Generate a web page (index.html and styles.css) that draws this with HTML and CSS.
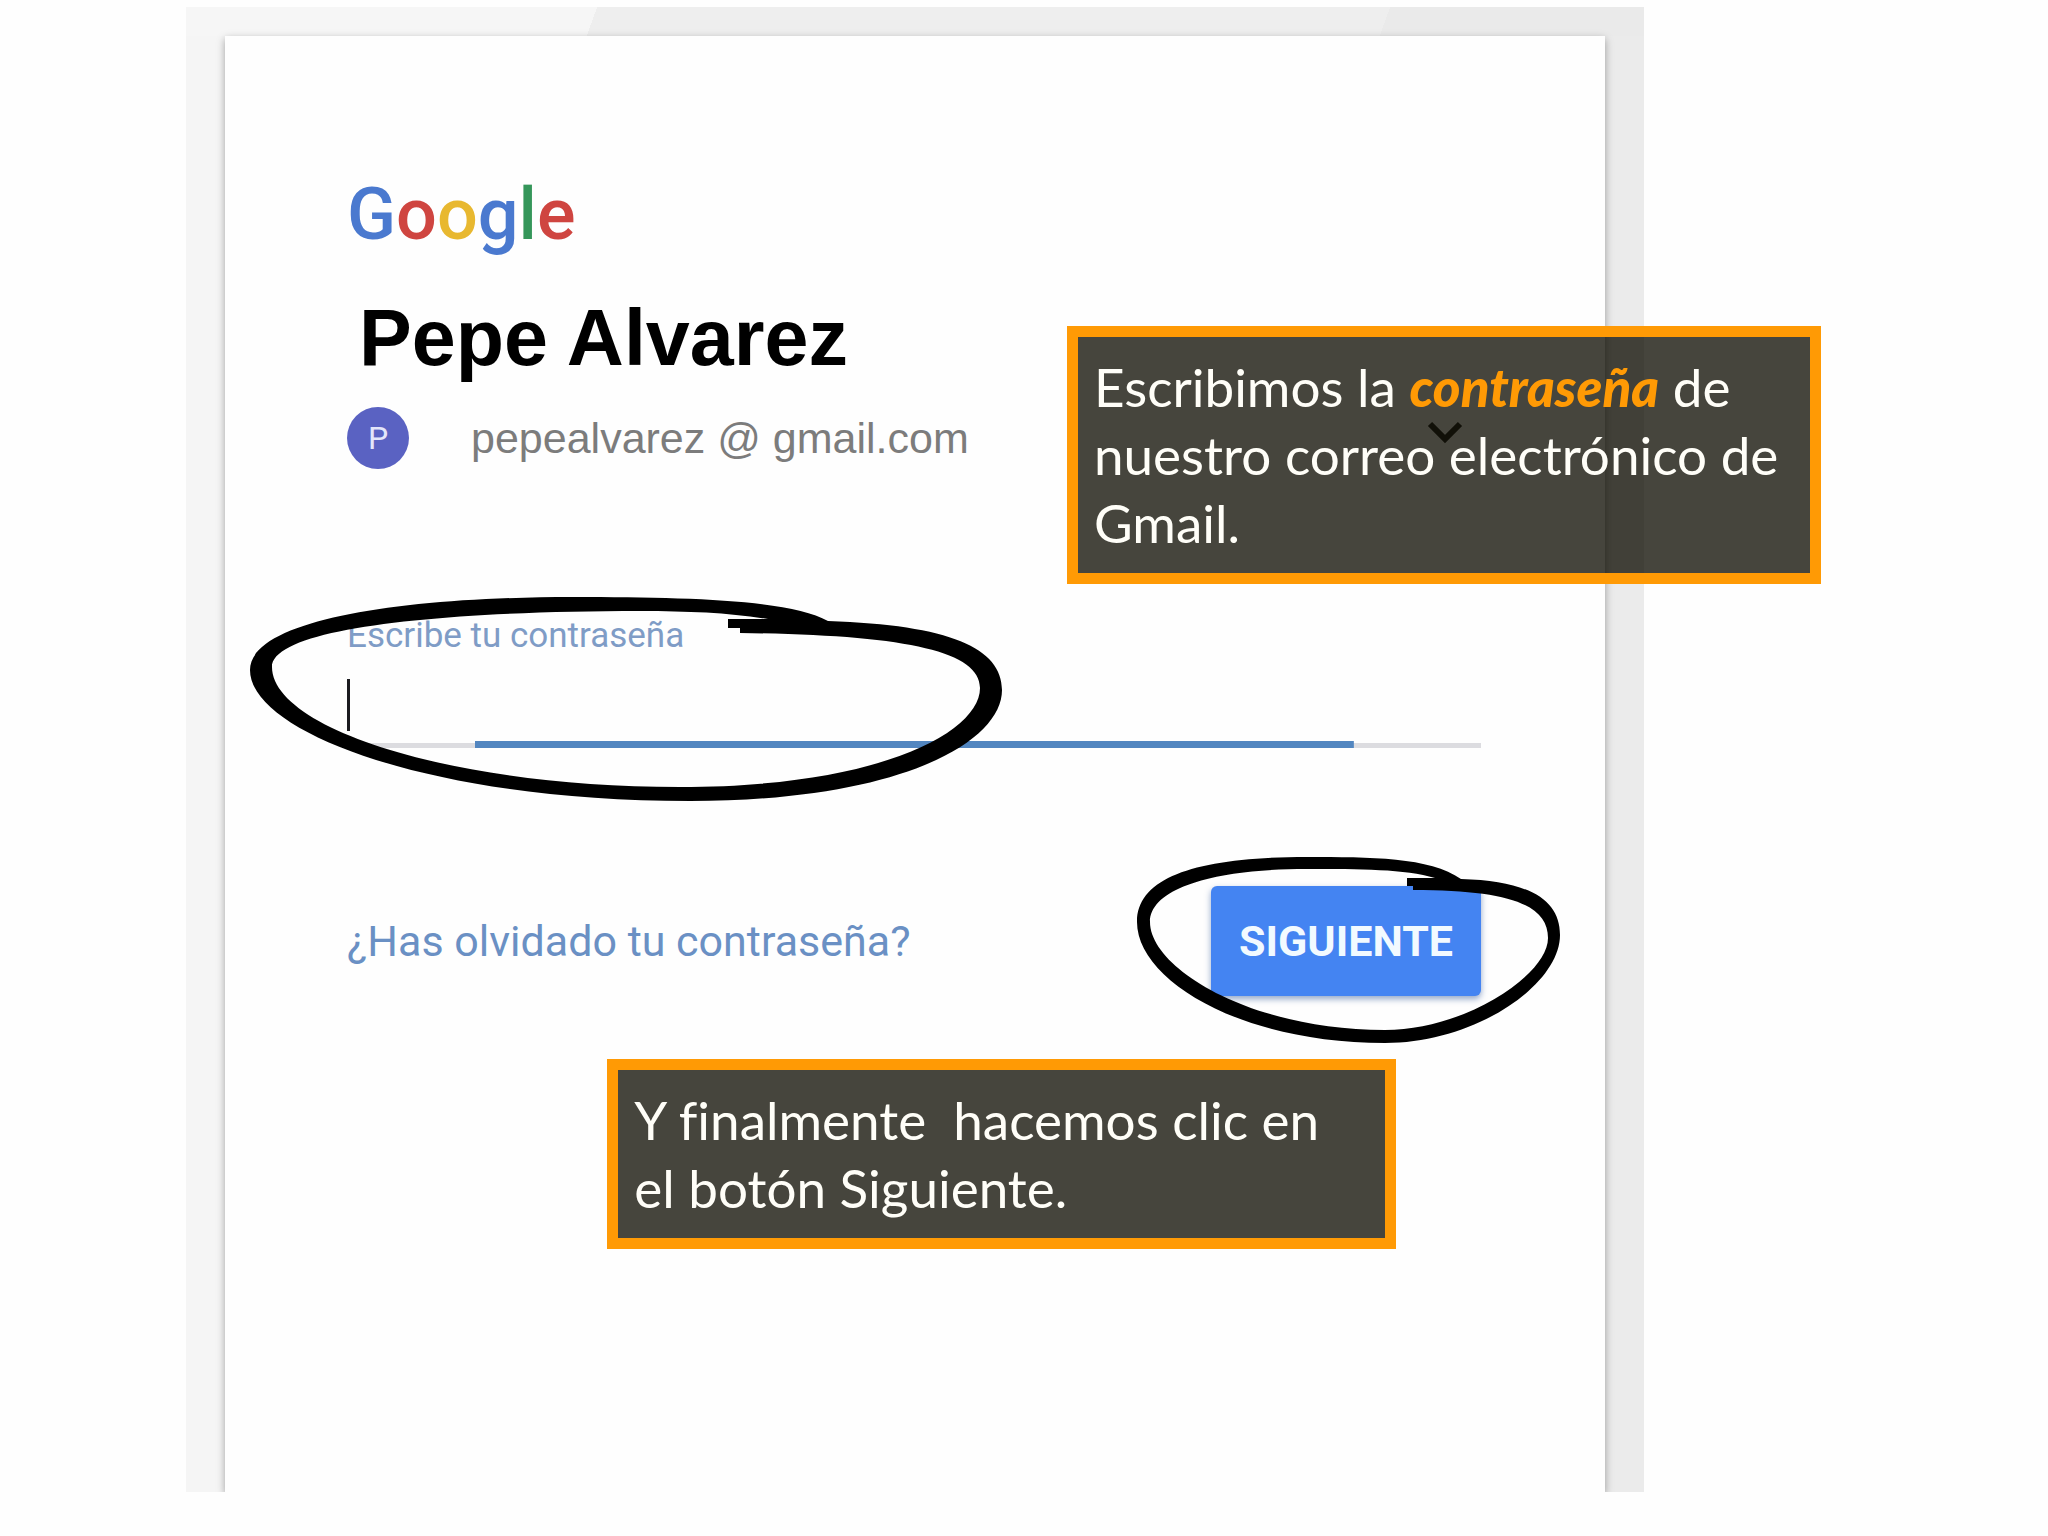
FILE: index.html
```
<!DOCTYPE html>
<html lang="es">
<head>
    <meta charset="UTF-8">
    <meta name="viewport" content="width=device-width, initial-scale=1.0">
    <title>Iniciar sesión</title>
    <link rel="stylesheet" href="styles.css">
</head>
<body>
    <div class="slide">
        <div class="frame">
            <form class="card">
                <div class="logo" aria-label="Google"><span class="blue">G</span><span class="red">o</span><span class="yellow">o</span><span class="blue">g</span><span class="green">l</span><span class="red">e</span></div>
                <h1>Pepe Alvarez</h1>
                <div class="account">
                    <span class="avatar">P</span>
                    <span class="email">pepealvarez @ gmail.com</span>
                    <svg class="chevron" width="36" height="24" viewBox="0 0 36 24">
                        <path d="M3 3 L18 18 L33 3" fill="none" stroke="#222" stroke-width="6"/>
                    </svg>
                </div>

                <div class="field">
                    <label for="password">Escribe tu contraseña</label>
                    <input type="password" id="password" name="password">
                    <span class="caret"></span>
                    <svg class="circle circle-field" width="752" height="206" viewBox="250 596 752 206">
                        <path fill-rule="evenodd" d="M828 621 C950 625 1002 648 1002 690 C1002 742 900 801 690 801 C430 801 250 732 250 670 C250 620 400 597 573 597 C690 597 790 600 828 621 Z M740 633 C900 635 980 650 980 688 C980 732 880 787 680 787 C450 787 272 728 272 667 C272 628 440 611 640 611 C690 611 730 613 768 619 H728 V628 H740 Z"/>
                    </svg>
                </div>

                <div class="actions">
                    <a href="#">¿Has olvidado tu contraseña?</a>
                    <div class="next">
                        <button type="submit">SIGUIENTE</button>
                        <svg class="circle circle-button" width="424" height="186" viewBox="1137 857 424 186">
                            <path fill-rule="evenodd" d="M1461 879 C1530 881 1560 900 1560 935 C1560 985 1475 1043 1385 1043 C1240 1043 1137 980 1137 922 C1137 876 1200 857 1307 857 C1370 857 1430 857 1461 879 Z M1413 890 C1510 890 1548 905 1548 938 C1548 975 1465 1030 1385 1030 C1250 1030 1150 968 1150 922 C1150 888 1215 869 1307 869 C1360 869 1405 869 1435 878 H1407 V886 H1413 Z"/>
                        </svg>
                    </div>
                </div>
            </form>
        </div>

        <p class="callout callout-password">Escribimos la <em>contraseña</em> de nuestro correo electrónico de Gmail.</p>
        <p class="callout callout-next">Y finalmente &nbsp;hacemos clic en el botón Siguiente.</p>
    </div>
</body>
</html>
```
FILE: styles.css
```
* {
    box-sizing: border-box;
}
body {
    margin: 0;
    background-color: #fefefe;
    font-family: Roboto, Arial, sans-serif;
}
.slide {
    position: relative;
    min-height: 100vh;
    padding: 7px 404px 44px 186px;
    display: flex;
}
.frame {
    flex: 1;
    display: flex;
    padding: 29px 39px 0;
    overflow: hidden;
    background:
        linear-gradient(110deg, #f6f6f6 28%, #eeeeee 28% 82%, #eaeaea 82%) no-repeat top / 100% 29px,
        linear-gradient(to right, #f5f5f5 50%, #ebebeb 50%);
}
.card {
    flex: 1;
    padding: 138px 124px 0 122px;
    background-color: #fefefe;
    box-shadow: 0 3px 8px rgba(0, 0, 0, 0.35);
}

/* Cabecera */
.logo {
    font-size: 72px;
    line-height: 82px;
    font-weight: 500;
}
.blue {
    color: #4a79cf;
}
.red {
    color: #cf4540;
}
.yellow {
    color: #e8b830;
}
.green {
    color: #35965a;
}
h1 {
    width: fit-content;
    margin: 38px 0 0;
    padding-left: 12px;
    font-family: "Liberation Sans", Arial, sans-serif;
    font-size: 79px;
    line-height: 88px;
    color: #000;
}
.account {
    display: flex;
    align-items: center;
    margin-top: 25px;
    padding-right: 18px;
}
.avatar {
    width: 62px;
    height: 62px;
    border-radius: 50%;
    background-color: #5a62c2;
    color: #e4e6fa;
    font-size: 32px;
    line-height: 62px;
    text-align: center;
}
.email {
    margin-left: 62px;
    font-family: "Liberation Sans", Arial, sans-serif;
    font-size: 43px;
    line-height: 62px;
    color: #7c7c7c;
}
.chevron {
    align-self: flex-start;
    margin: 14px 0 0 auto;
}

/* Campo de la contraseña */
.field {
    position: relative;
    margin-top: 147px;
}
.field label {
    display: block;
    font-size: 35px;
    line-height: 40px;
    color: #7f9cc6;
}
.field input {
    display: block;
    width: 100%;
    height: 92px;
    padding: 0;
    border: none;
    outline: none;
    font-size: 43px;
    background:
        linear-gradient(#5286c0, #5286c0) no-repeat 50% 100% / 77.5% 7px,
        linear-gradient(#dcdce0, #dcdce0) no-repeat 0 100% / 100% 5px;
}
.caret {
    position: absolute;
    left: 0;
    top: 63px;
    width: 3px;
    height: 52px;
    background-color: #1c1c20;
}
.circle {
    position: absolute;
    pointer-events: none;
}
.circle-field {
    left: -97px;
    top: -20px;
}
.circle-button {
    left: -74px;
    top: -29px;
}

/* Acciones */
.actions {
    display: flex;
    justify-content: space-between;
    align-items: center;
    margin-top: 138px;
}
.actions a {
    font-size: 43px;
    color: #6a90c4;
    text-decoration: none;
}
.next {
    position: relative;
}
.next button {
    display: block;
    height: 110px;
    padding: 0 28px;
    border: none;
    border-radius: 6px;
    background-color: #4484f2;
    box-shadow: 0 3px 6px rgba(40, 80, 150, 0.5);
    color: #f2faff;
    font-family: inherit;
    font-size: 43px;
    font-weight: 700;
    cursor: pointer;
}

/* Notas explicativas */
.callout {
    position: absolute;
    margin: 0;
    padding: 16px 20px 16px 16px;
    border: 11px solid #ff9a05;
    background-color: rgba(12, 10, 0, 0.76);
    background-clip: padding-box;
    color: #fffef8;
    font-family: Lato, Calibri, sans-serif;
    font-size: 53px;
    line-height: 68px;
    font-variant-ligatures: none;
}
.callout em {
    color: #ff9a05;
    font-weight: 900;
}
.callout-password {
    left: 52.1%;
    top: 326px;
    width: 36.8%;
}
.callout-next {
    left: 29.65%;
    top: 1059px;
    width: 38.5%;
}
```
